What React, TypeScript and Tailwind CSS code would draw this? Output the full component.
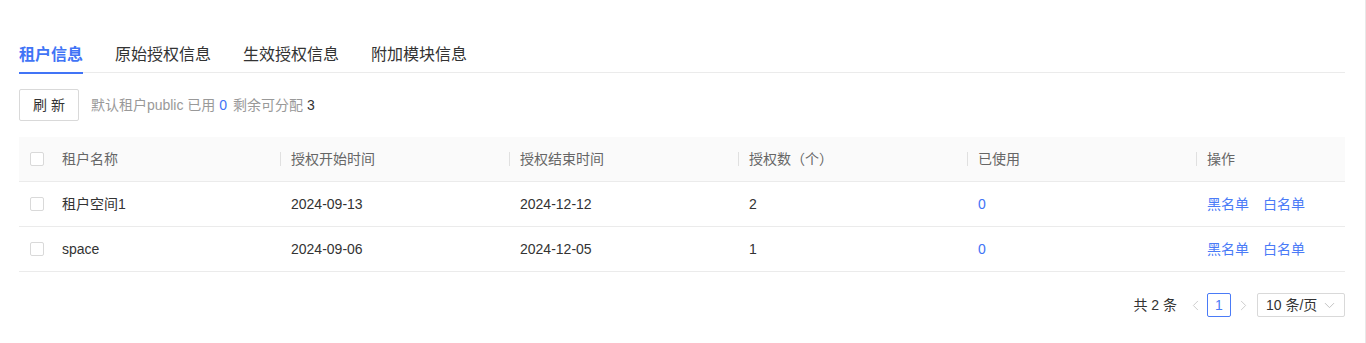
import { ChevronDown, ChevronLeft, ChevronRight } from "lucide-react";

type Tenant = {
  id: string;
  name: string;
  start: string;
  end: string;
  count: number;
  used: number;
};

const tenants: Tenant[] = [
  { id: "1", name: "租户空间1", start: "2024-09-13", end: "2024-12-12", count: 2, used: 0 },
  { id: "2", name: "space", start: "2024-09-06", end: "2024-12-05", count: 1, used: 0 },
];

const tabs = ["租户信息", "原始授权信息", "生效授权信息", "附加模块信息"];

const columns = ["租户名称", "授权开始时间", "授权结束时间", "授权数（个）", "已使用", "操作"];

function Checkbox() {
  return <span className="block w-[14px] h-[14px] border border-[#d9d9d9] rounded-[2px] bg-white" />;
}

export default function App() {
  return (
    <div className="w-full h-[343px] bg-white border-r border-[#e8e8e8] pl-[19px] pr-[20px] pt-[43px] font-['Liberation_Sans','Noto_Sans_CJK_SC',sans-serif] text-[14px] text-[#333]">
      {/* Tabs */}
      <div className="flex gap-[32px] border-b border-[#ebebeb]">
        {tabs.map((tab, i) => (
          <div
            key={tab}
            className={`relative pb-[5px] text-[16px] leading-[24px] ${
              i === 0 ? "font-bold text-[#4174f6]" : "text-[#333]"
            }`}
          >
            {tab}
            {i === 0 && <span className="absolute left-0 right-0 bottom-[-2px] h-[2px] bg-[#4174f6]" />}
          </div>
        ))}
      </div>

      {/* Toolbar */}
      <div className="flex items-center mt-[16px]">
        <button className="h-[32px] px-[13px] border border-[#d9d9d9] rounded-[2px] bg-white text-[14px] text-[#333] whitespace-pre">
          刷 新
        </button>
        <p className="ml-[12px] text-[14px] text-[#999]">
          默认租户public 已用 <span className="text-[#4174f6]">0</span>
          <span className="ml-[6px]">剩余可分配</span> <span className="text-[#333]">3</span>
        </p>
      </div>

      {/* Table */}
      <div className="mt-[16px]">
        <div className="grid grid-cols-[32px_229px_229px_229px_229px_229px_1fr] h-[45px] items-center bg-[#fafafa] border-b border-[#ebebeb] text-[#666]">
          <div className="pl-[11px]">
            <Checkbox />
          </div>
          {columns.map((col, i) => (
            <div key={col} className="relative pl-[11px]">
              {i > 0 && <span className="absolute left-0 top-1/2 -translate-y-1/2 w-px h-[14px] bg-[#e0e0e0]" />}
              {col}
            </div>
          ))}
        </div>
        {tenants.map((t) => (
          <div
            key={t.id}
            className="grid grid-cols-[32px_229px_229px_229px_229px_229px_1fr] h-[45px] items-center border-b border-[#ebebeb]"
          >
            <div className="pl-[11px]">
              <Checkbox />
            </div>
            <div className="pl-[11px]">{t.name}</div>
            <div className="pl-[11px]">{t.start}</div>
            <div className="pl-[11px]">{t.end}</div>
            <div className="pl-[11px]">{t.count}</div>
            <div className="pl-[11px] text-[#4174f6]">{t.used}</div>
            <div className="pl-[11px] flex gap-[14px] text-[#4a7bf7]">
              <span>黑名单</span>
              <span>白名单</span>
            </div>
          </div>
        ))}
      </div>

      {/* Pagination */}
      <div className="flex items-center justify-end mt-[21px] h-[24px]">
        <span className="mr-[6px]">共 2 条</span>
        <span className="w-[24px] flex justify-center text-[#c8c8c8]">
          <ChevronLeft size={17} strokeWidth={1.25} />
        </span>
        <span className="w-[24px] h-[24px] flex items-center justify-center border border-[#4a7bf7] rounded-[2px] text-[#4a7bf7]">
          1
        </span>
        <span className="w-[24px] flex justify-center text-[#c8c8c8]">
          <ChevronRight size={17} strokeWidth={1.25} />
        </span>
        <div className="ml-[2px] w-[88px] h-[24px] flex items-center justify-between pl-[8px] pr-[6px] border border-[#d9d9d9] rounded-[2px]">
          <span>10 条/页</span>
          <ChevronDown size={17} strokeWidth={1.25} className="text-[#bbb]" />
        </div>
      </div>
    </div>
  );
}
